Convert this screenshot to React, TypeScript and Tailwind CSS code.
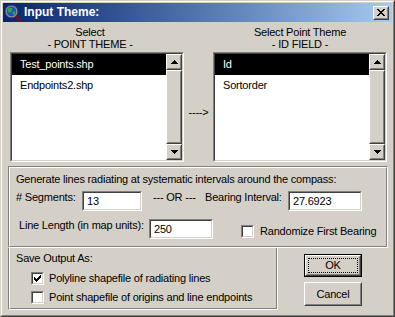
import React from "react";

const sunkenOuter = "border border-t-[#808080] border-l-[#808080] border-r-white border-b-white";
const sunkenInner = "border border-t-[#404040] border-l-[#404040] border-r-[#d4d0c8] border-b-[#d4d0c8]";
const raisedOuter = "border border-t-white border-l-white border-r-[#404040] border-b-[#404040]";
const raisedInner = "border border-t-[#d4d0c8] border-l-[#d4d0c8] border-r-[#808080] border-b-[#808080]";

function Arrow({ up }: { up: boolean }) {
  const rows = up
    ? [[3, 1], [2, 3], [1, 5], [0, 7]]
    : [[0, 7], [1, 5], [2, 3], [3, 1]];
  return (
    <svg width="7" height="4" viewBox="0 0 7 4" shapeRendering="crispEdges">
      {rows.map(([x, w], i) => (
        <rect key={i} x={x} y={i} width={w} height={1} fill="#000" />
      ))}
    </svg>
  );
}

function RaisedBox({ className, children }: { className: string; children?: React.ReactNode }) {
  return (
    <div className={`${raisedOuter} ${className}`}>
      <div className={`${raisedInner} w-full h-full bg-[#d4d0c8] flex items-center justify-center`}>{children}</div>
    </div>
  );
}

function ScrollBar() {
  return (
    <div className="w-[16px] h-full flex flex-col">
      <RaisedBox className="h-[16px] w-[16px]">
        <Arrow up={true} />
      </RaisedBox>
      <RaisedBox className="flex-1 w-[16px]" />
      <RaisedBox className="h-[16px] w-[16px]">
        <Arrow up={false} />
      </RaisedBox>
    </div>
  );
}

function ListBox({ items }: { items: string[] }) {
  return (
    <div className={`${sunkenOuter} h-[110px] w-[174px]`}>
      <div className={`${sunkenInner} h-full flex bg-white`}>
        <div className="flex-1 flex flex-col">
          {items.map((it, i) => (
            <div
              key={it}
              className={i === 0 ? "h-[21px] leading-[21px] pl-[8px] bg-black text-white" : "h-[21px] leading-[21px] pl-[8px] text-black"}
            >
              {it}
            </div>
          ))}
        </div>
        <ScrollBar />
      </div>
    </div>
  );
}

function TextBox({ value, className }: { value: string; className: string }) {
  return (
    <div className={`${sunkenOuter} h-[20px] ${className}`}>
      <div className={`${sunkenInner} h-full bg-white flex items-center pl-[3px]`}>{value}</div>
    </div>
  );
}

function CheckBox({ checked }: { checked: boolean }) {
  return (
    <div className={`${sunkenOuter} w-[13px] h-[13px] shrink-0`}>
      <div className={`${sunkenInner} w-full h-full bg-white flex items-center justify-center`}>
        {checked && (
          <svg width="7" height="7" viewBox="0 0 7 7" shapeRendering="crispEdges">
            <rect x="0" y="2" width="1" height="3" fill="#000" />
            <rect x="1" y="3" width="1" height="3" fill="#000" />
            <rect x="2" y="4" width="1" height="3" fill="#000" />
            <rect x="3" y="3" width="1" height="3" fill="#000" />
            <rect x="4" y="2" width="1" height="3" fill="#000" />
            <rect x="5" y="1" width="1" height="3" fill="#000" />
            <rect x="6" y="0" width="1" height="3" fill="#000" />
          </svg>
        )}
      </div>
    </div>
  );
}

function TitleIcon() {
  return (
    <svg width="16" height="16" viewBox="0 0 16 16">
      <line x1="10" y1="10" x2="15" y2="15" stroke="#7a1010" strokeWidth="2.6" strokeLinecap="round" />
      <circle cx="6.5" cy="6.5" r="5.6" fill="#1f4fc4" stroke="#9a9a9a" strokeWidth="1.4" />
      <path d="M3 3.5 Q5 2 7.5 3.5 L6.5 6.5 L4 8 L2.8 6 Z" fill="#2aa845" />
      <path d="M7.5 7 L10 6 L10.3 8.8 L8 10.5 Z" fill="#2aa845" />
      <circle cx="6.5" cy="6.5" r="6.3" fill="none" stroke="#303030" strokeWidth="0.6" />
    </svg>
  );
}

function CloseGlyph() {
  const px: [number, number][] = [
    [0, 0], [1, 0], [6, 0], [7, 0],
    [1, 1], [2, 1], [5, 1], [6, 1],
    [2, 2], [3, 2], [4, 2], [5, 2],
    [3, 3], [4, 3],
    [2, 4], [3, 4], [4, 4], [5, 4],
    [1, 5], [2, 5], [5, 5], [6, 5],
    [0, 6], [1, 6], [6, 6], [7, 6],
  ];
  return (
    <svg width="8" height="7" viewBox="0 0 8 7" shapeRendering="crispEdges">
      {px.map(([x, y], i) => (
        <rect key={i} x={x} y={y} width={1} height={1} fill="#000" />
      ))}
    </svg>
  );
}

export default function App() {
  return (
    <div className="w-[395px] h-[317px] font-['Liberation_Sans',Arial,sans-serif] text-[11px] tracking-[-0.2px] leading-[13px] text-black">
      <div className="w-full h-full border border-t-[#d4d0c8] border-l-[#d4d0c8] border-r-[#404040] border-b-[#404040]">
        <div className="w-full h-full border border-t-white border-l-white border-r-[#808080] border-b-[#808080] bg-[#d4d0c8] p-[1px] flex flex-col">
          {/* Title bar */}
          <div className="h-[19px] shrink-0 flex items-center bg-linear-to-r from-[#0a246a] to-[#a6caf0] pl-[2px] pr-[3px]">
            <TitleIcon />
            <span className="ml-[3px] text-white font-bold text-[12px] tracking-normal leading-[19px]">Input Theme:</span>
            <RaisedBox className="ml-auto w-[16px] h-[14px]">
              <CloseGlyph />
            </RaisedBox>
          </div>

          {/* Top selection area */}
          <div className="flex pl-[7px] pt-[4px]">
            <div className="w-[174px] flex flex-col">
              <div className="w-[160px] text-center leading-[12px]">
                <div>Select</div>
                <div>- POINT THEME -</div>
              </div>
              <div className="mt-[2px]">
                <ListBox items={["Test_points.shp", "Endpoints2.shp"]} />
              </div>
            </div>
            <div className="w-[29px] pt-[80px] text-center">----&gt;</div>
            <div className="w-[174px] flex flex-col">
              <div className="w-full text-center leading-[12px]">
                <div>Select Point Theme</div>
                <div>- ID FIELD -</div>
              </div>
              <div className="mt-[2px]">
                <ListBox items={["Id", "Sortorder"]} />
              </div>
            </div>
          </div>

          {/* Middle group */}
          <div className="ml-[5px] mt-[4px] w-[380px] h-[82px] border border-t-[#808080] border-l-[#808080] border-r-white border-b-white">
            <div className="w-full h-full border border-t-white border-l-white border-r-[#808080] border-b-[#808080] pl-[6px] pt-[5px] flex flex-col">
              <div>Generate lines radiating at systematic intervals around the compass:</div>
              <div className="flex items-start mt-[5px]">
                <span className="w-[66px]">#&nbsp;Segments:</span>
                <TextBox value="13" className="w-[60px]" />
                <span className="w-[63px] pl-[11px]">--- OR ---</span>
                <span className="w-[83px]">Bearing Interval:</span>
                <TextBox value="27.6923" className="w-[74px]" />
              </div>
              <div className="flex items-start mt-[8px]">
                <span className="w-[133px] pl-[3px]">Line Length (in map units):</span>
                <TextBox value="250" className="w-[64px]" />
                <div className="ml-[28px] mt-[6px] flex items-center">
                  <CheckBox checked={false} />
                  <span className="ml-[6px]">Randomize First Bearing</span>
                </div>
              </div>
            </div>
          </div>

          {/* Bottom area */}
          <div className="flex ml-[5px]">
            <div className="w-[270px] h-[62px] border-l border-r border-b border-l-[#808080] border-r-white border-b-white">
              <div className="w-full h-full border-l border-r border-b border-l-white border-r-[#808080] border-b-[#808080] pl-[6px] pt-[4px] flex flex-col">
                <div>Save Output As:</div>
                <div className="flex items-center mt-[7px] pl-[15px]">
                  <CheckBox checked={true} />
                  <span className="ml-[5px]">Polyline shapefile of radiating lines</span>
                </div>
                <div className="flex items-center mt-[6px] pl-[15px]">
                  <CheckBox checked={false} />
                  <span className="ml-[5px]">Point shapefile of origins and line endpoints</span>
                </div>
              </div>
            </div>
            <div className="ml-[26px] flex flex-col">
              <div className="mt-[6px] w-[58px] h-[23px] border border-black">
                <div className={`${raisedOuter} w-full h-full`}>
                  <div className={`${raisedInner} w-full h-full bg-[#d4d0c8] p-[1px]`}>
                    <div className="w-full h-full border border-dotted border-black flex items-center justify-center">OK</div>
                  </div>
                </div>
              </div>
              <RaisedBox className="mt-[5px] w-[58px] h-[24px]">Cancel</RaisedBox>
            </div>
          </div>
        </div>
      </div>
    </div>
  );
}
